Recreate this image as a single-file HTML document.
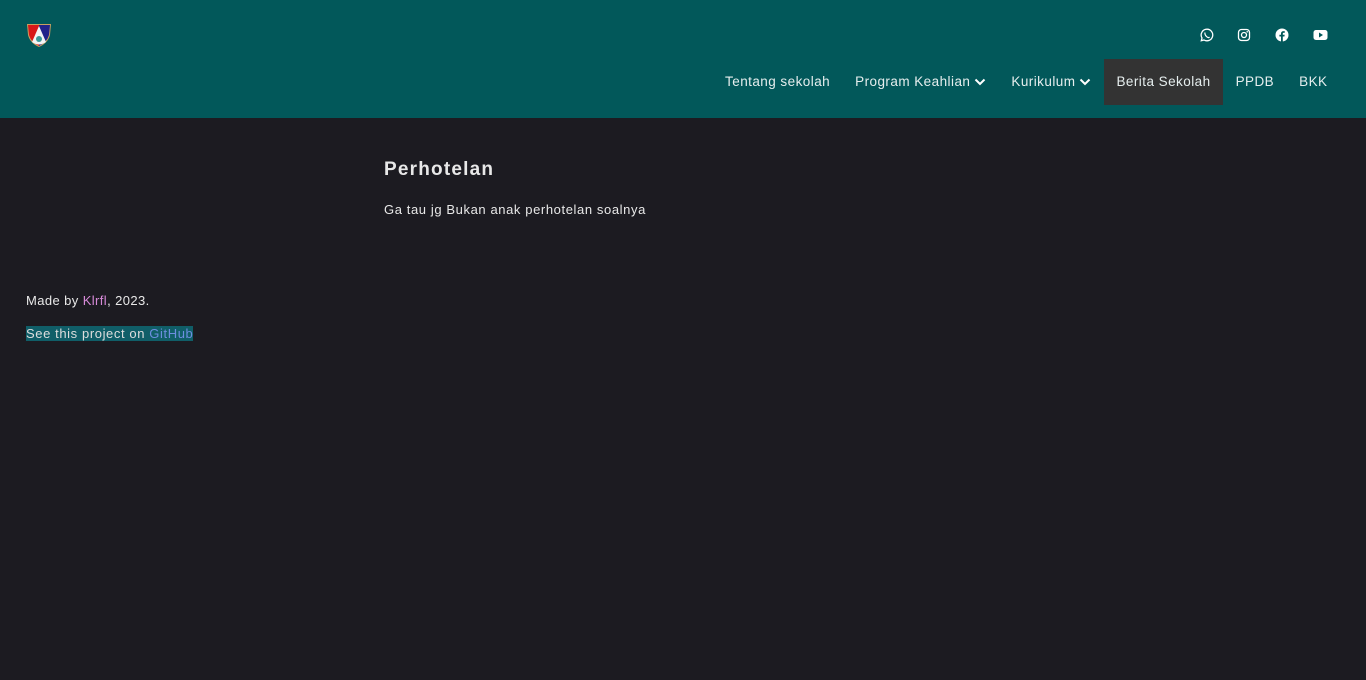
<!DOCTYPE html>
<html><head><meta charset="utf-8"><style>
body{margin:0;background:#1c1b21;font-family:"Liberation Sans",sans-serif;color:#e8e8e8;width:1366px;height:680px;overflow:hidden}
header{position:relative;height:118px;background:#02585a}
.logo{position:absolute;left:26px;top:23px}
nav{position:absolute;right:26px;top:59px;display:flex;height:46px;font-size:13.5px;color:#e6eeee;letter-spacing:0.45px}
nav div{padding:0 12.5px;line-height:46px;display:flex;align-items:center}
nav .act{background:#333;}
nav svg{margin-left:4px}
h1{position:absolute;left:384px;top:159px;margin:0;font-size:19px;font-weight:bold;color:#e8e8e8;letter-spacing:1.2px}
.p{position:absolute;left:384px;top:202px;font-size:13px;letter-spacing:0.6px}
.f1{position:absolute;left:26px;top:293px;font-size:13px;letter-spacing:0.4px}
.f2{position:absolute;left:26px;top:326px;font-size:13px;background:#105e68;color:#ddd;letter-spacing:0.6px}
</style></head><body>
<header>
<svg class="logo" width="26" height="25" viewBox="0 0 26 25"><path d="M1 1L25 1L24 12Q22 20 13 24Q4 20 2 12Z" fill="#c8a060"/><path d="M2 2L13 2L13 23Q5 19 3 12Z" fill="#d81818"/><path d="M13 2L24 2L23 12Q21 19 13 23Z" fill="#22228a"/><path d="M13 3L20 19Q13 24 6 19Z" fill="#f4f4f4"/><circle cx="13" cy="16" r="3" fill="#3a9a9a"/></svg>
<svg style="position:absolute;left:1200px;top:28px" width="14" height="14" viewBox="0 0 14 14"><path d="M7 1.2A5.8 5.8 0 0 0 2 10L1.3 12.7 4 12A5.8 5.8 0 1 0 7 1.2Z" fill="none" stroke="#fff" stroke-width="1.3"/><path d="M5 4.5Q4.5 6.5 6.5 8.5T9.5 9" fill="none" stroke="#fff" stroke-width="1.2"/></svg>
<svg style="position:absolute;left:1237px;top:28px" width="14" height="14" viewBox="0 0 14 14"><rect x="1.5" y="1.5" width="11" height="11" rx="3" fill="none" stroke="#fff" stroke-width="1.3"/><circle cx="7" cy="7" r="2.5" fill="none" stroke="#fff" stroke-width="1.3"/><circle cx="10.2" cy="3.8" r=".8" fill="#fff"/></svg>
<svg style="position:absolute;left:1275px;top:28px" width="14" height="14" viewBox="0 0 14 14"><circle cx="7" cy="7" r="6.5" fill="#fff"/><path d="M7.8 14V8.5H9.4L9.7 6.7H7.8V5.6Q7.8 4.8 8.7 4.8H9.8V3.2Q6.2 2.6 6 5.4V6.7H4.4V8.5H6V14Z" fill="#02585a"/></svg>
<svg style="position:absolute;left:1313px;top:29px" width="15" height="12" viewBox="0 0 15 12"><rect x="0.5" y="1" width="14" height="10" rx="2.5" fill="#fff"/><path d="M6 3.5L10 6 6 8.5Z" fill="#02585a"/></svg>
<nav><div>Tentang sekolah</div><div>Program Keahlian<svg width="12" height="8" viewBox="0 0 12 8"><path d="M1.5 1.5L6 6 10.5 1.5" fill="none" stroke="#fff" stroke-width="2"/></svg></div><div>Kurikulum<svg width="12" height="8" viewBox="0 0 12 8"><path d="M1.5 1.5L6 6 10.5 1.5" fill="none" stroke="#fff" stroke-width="2"/></svg></div><div class="act">Berita Sekolah</div><div>PPDB</div><div>BKK</div></nav>
</header>
<h1>Perhotelan</h1>
<div class="p">Ga tau jg Bukan anak perhotelan soalnya</div>
<div class="f1">Made by <span style="color:#d78ad8">Klrfl</span>, 2023.</div>
<div class="f2">See this project on <span style="color:#6d8ee0">GitHub</span></div>
</body></html>
